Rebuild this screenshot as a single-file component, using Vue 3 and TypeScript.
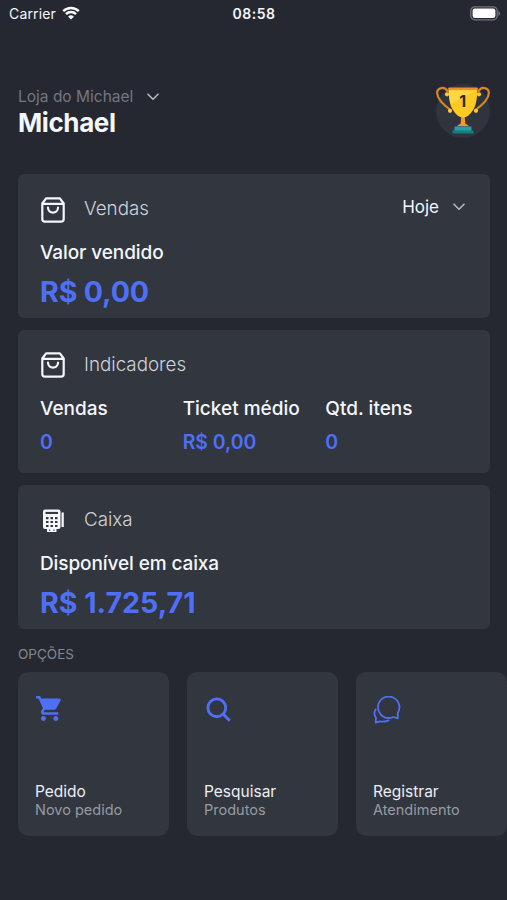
<script setup lang="ts">
interface Indicator {
  label: string
  value: string
}
interface Option {
  icon: 'cart' | 'search' | 'chat'
  title: string
  subtitle: string
}

const indicators: Indicator[] = [
  { label: 'Vendas', value: '0' },
  { label: 'Ticket médio', value: 'R$ 0,00' },
  { label: 'Qtd. itens', value: '0' },
]

const options: Option[] = [
  { icon: 'cart', title: 'Pedido', subtitle: 'Novo pedido' },
  { icon: 'search', title: 'Pesquisar', subtitle: 'Produtos' },
  { icon: 'chat', title: 'Registrar', subtitle: 'Atendimento' },
]
</script>

<template>
  <div class="screen">
    <div class="status">
      <div class="carrier">
        <span class="carrier-name">Carrier</span>
        <svg class="wifi" viewBox="0 0 18 14">
          <path d="M1.2 5.1a11.2 11.2 0 0 1 15.6 0" />
          <path d="M4 8.1a7.2 7.2 0 0 1 10 0" />
          <path class="dot" d="M9 13.6 6.1 10.7a4.1 4.1 0 0 1 5.8 0z" />
        </svg>
      </div>
      <span class="clock">08:58</span>
      <svg class="battery" viewBox="0 0 31 15">
        <rect class="shell" x=".8" y=".8" width="26.4" height="13" rx="4" />
        <rect class="charge" x="2.6" y="2.6" width="22.8" height="9.4" rx="2.2" />
        <path class="cap" d="M28.4 4.9c2.2.7 2.2 4.1 0 4.8z" />
      </svg>
    </div>

    <header class="header">
      <div>
        <div class="store">
          <span class="store-name">Loja do Michael</span>
          <svg class="chevron" viewBox="0 0 12 8"><path d="m1 1.2 5 5 5-5" /></svg>
        </div>
        <h1 class="user">Michael</h1>
      </div>
      <div class="badge">
        <svg class="trophy" viewBox="0 0 54 54">
          <g fill="none" stroke="#d9862a" stroke-width="2.2" stroke-linecap="round">
            <path d="M11.5 7.2C9 2.2.9 3.1 1.2 9.3c.2 6.5 7 12.2 13.8 17" />
            <path d="M42.5 7.2C45 2.2 53.1 3.1 52.8 9.3c-.2 6.5-7 12.2-13.8 17" />
          </g>
          <g fill="#fbc83c">
            <circle cx="11" cy="10.3" r="2.1" /><circle cx="43" cy="10.3" r="2.1" />
            <circle cx="14" cy="26.8" r="2.1" /><circle cx="40" cy="26.8" r="2.1" />
          </g>
          <path d="M25.3 31h3.4l.6 8.5 4 2.7H20.7l4-2.7z" fill="#f39a26" />
          <path d="M12.5 4h29c-.3 9-1 17-4.5 22-2.7 4.5-6 7.5-10 7.5s-7.3-3-10-7.5c-3.500-5-4.200-13-4.500-22z" fill="#fdca22" />
          <path d="M12.6 6.5h27.5L14.9 20c-1.500-4-2.100-8.500-2.300-13.500z" fill="#ffdf58" opacity=".6" />
          <path d="M12.5 3.5h29V6h-29z" fill="#ef9127" />
          <path d="M18.5 42.5h17V47h-17z" fill="#279fa2" />
          <path d="M16.5 46.5h21v3h-21z" fill="#157c84" />
          <text x="26.7" y="22.7" text-anchor="middle">1</text>
        </svg>
      </div>
    </header>

    <main class="cards">
      <section class="card">
        <div class="card-head">
          <svg class="bag" viewBox="0 0 24 26">
            <path d="M1.3 6.5 5.1 1.4h13.8l3.8 5.1v15.4a2.7 2.7 0 0 1-2.7 2.7H4a2.7 2.7 0 0 1-2.7-2.7zM1.3 6.8h21.4M7 10.7c.2 6.5 9.8 6.5 10 0" />
          </svg>
          <h2 class="card-title">Vendas</h2>
          <div class="period">
            <span class="period-name">Hoje</span>
            <svg class="chevron" viewBox="0 0 12 8"><path d="m1 1.2 5 5 5-5" /></svg>
          </div>
        </div>
        <div class="label heading">Valor vendido</div>
        <div class="amount">R$ 0,00</div>
      </section>

      <section class="card">
        <div class="card-head">
          <svg class="bag" viewBox="0 0 24 26">
            <path d="M1.3 6.5 5.1 1.4h13.8l3.8 5.1v15.4a2.7 2.7 0 0 1-2.7 2.7H4a2.7 2.7 0 0 1-2.7-2.7zM1.3 6.8h21.4M7 10.7c.2 6.5 9.8 6.5 10 0" />
          </svg>
          <h2 class="card-title">Indicadores</h2>
        </div>
        <div class="indicators">
          <div v-for="item in indicators" :key="item.label">
            <div class="label">{{ item.label }}</div>
            <div class="value">{{ item.value }}</div>
          </div>
        </div>
      </section>

      <section class="card">
        <div class="card-head">
          <svg class="register" viewBox="0 0 24 26">
            <rect x="2" y="1.5" width="17.5" height="19.5" rx="2" fill="#f4f6fa" />
            <path d="M20.5 4.500h2.300V19h-2.300z" fill="#f4f6fa" />
            <path d="M6 20.500h9.500V24H6z" fill="#f4f6fa" />
            <g fill="#31363f">
              <path d="M4.500 3.900H17V6H4.500z" />
              <path d="M5 9.100h2.500v2.100H5zM9.500 9.100H12v2.100H9.500zM14 9.100h2.500v2.100H14zM5 13h2.500v2.100H5zM9.500 13H12v2.100H9.500zM14 13h2.500v2.100H14zM5 16.900h2.500v2H5zM9.500 16.900H12v2H9.500zM14 16.900h2.500v2H14z" />
              <path d="M8 21.500h1.200v1.300H8zM12.300 21.500h1.200v1.300h-1.200z" />
            </g>
          </svg>
          <h2 class="card-title">Caixa</h2>
        </div>
        <div class="label heading">Disponível em caixa</div>
        <div class="amount total">R$ 1.725,71</div>
      </section>
    </main>

    <h3 class="section-title">OPÇÕES</h3>
    <nav class="options">
      <a v-for="option in options" :key="option.title" class="option">
        <svg v-if="option.icon === 'cart'" class="cart" viewBox="1 2 21 20">
          <path d="M7 18c-1.100 0-1.990.9-1.990 2S5.900 22 7 22s2-.9 2-2-.9-2-2-2zM1 2v2h2l3.600 7.590-1.350 2.450c-.16.280-.25.610-.25.960 0 1.100.9 2 2 2h12v-2H7.420c-.14 0-.25-.11-.25-.25l.03-.12.900-1.630h7.450c.75 0 1.410-.41 1.750-1.030l3.580-6.490A1.003 1.003 0 0 0 20 4H5.210l-.94-2H1zm16 16c-1.100 0-1.990.9-1.990 2s.89 2 1.990 2 2-.9 2-2-.9-2-2-2z" />
        </svg>
        <svg v-else-if="option.icon === 'search'" class="search" viewBox="0 0 26 26">
          <circle cx="10.8" cy="10.8" r="8.900" />
          <path d="m17.300 17.300 6.500 6.500" />
        </svg>
        <svg v-else class="chat" viewBox="0 0 28 28">
          <path d="M24.700 22.400l.2-5.600A10.700 10.700 0 1 0 16 22c1.700 0 3.200-.4 4.600-1z" />
          <path d="M2.600 13.500c-2 3.200-1.200 6 .4 8.200l-.4 4.900 4.300-1.300c3 .8 6 .3 8.700-.9" />
        </svg>
        <div class="option-title">{{ option.title }}</div>
        <div class="option-subtitle">{{ option.subtitle }}</div>
      </a>
    </nav>
  </div>
</template>

<style>
body {
  background: #252831;
}
</style>

<style scoped>
.screen {
  box-sizing: border-box;
  width: 100%;
  height: 900px;
  overflow: hidden;
  background: #252831;
  color: #f4f6fa;
  font-family: Inter, "Liberation Sans", sans-serif;
}
h1, h2, h3 {
  margin: 0;
}
svg {
  display: block;
  flex: none;
}
.status {
  display: grid;
  grid-template-columns: 1fr auto 1fr;
  align-items: center;
  height: 27px;
  padding: 0 6px 0 9px;
}
.carrier {
  display: flex;
  align-items: center;
  gap: 6px;
}
.carrier-name {
  font-size: 14px;
  line-height: 20px;
  letter-spacing: 0.15px;
}
.wifi {
  width: 18px;
  height: 14px;
  margin-top: -1px;
  fill: none;
  stroke: #f8f9fb;
  stroke-width: 2.5;
}
.wifi .dot {
  fill: #f8f9fb;
  stroke: none;
}
.clock {
  margin-left: -2px;
  font-size: 14px;
  line-height: 20px;
  font-weight: 600;
  letter-spacing: 0.55px;
}
.battery {
  width: 31px;
  height: 15px;
  justify-self: end;
}
.shell {
  fill: none;
  stroke: #70737a;
  stroke-width: 1.3;
}
.charge {
  fill: #fff;
}
.cap {
  fill: #70737a;
}
.header {
  display: flex;
  justify-content: space-between;
  align-items: flex-start;
  height: 91px;
  padding: 56px 17px 0 18px;
}
.store {
  display: flex;
  align-items: center;
  gap: 14px;
  height: 27px;
}
.store-name {
  color: #737780;
  font-size: 15.5px;
  line-height: 20px;
}
.chevron {
  width: 12px;
  height: 8px;
  fill: none;
  stroke: #b5b8bf;
  stroke-width: 1.6;
  stroke-linecap: round;
  stroke-linejoin: round;
}
.user {
  font-size: 26px;
  line-height: 26px;
  font-weight: 700;
  letter-spacing: -0.4px;
}
.badge {
  width: 54px;
  height: 54px;
  margin-top: 1px;
  border-radius: 50%;
  background: #2f343d;
}
.trophy {
  width: 54px;
  height: 54px;
}
.trophy text {
  fill: #2b2923;
  font-size: 16px;
  font-weight: 700;
}
.cards {
  display: grid;
  grid-auto-rows: 143.6px;
  gap: 12px;
  padding: 0 17px 0 18px;
}
.card {
  box-sizing: border-box;
  padding: 20px 22px 0;
  border-radius: 6px;
  background: #31363f;
}
.card-head {
  display: flex;
  align-items: center;
  height: 29px;
}
.bag,
.register {
  width: 24px;
  height: 26px;
  margin: 2px 19px 0 1px;
}
.bag {
  fill: none;
  stroke: #f4f6fa;
  stroke-width: 2.2;
  stroke-linejoin: round;
  stroke-linecap: round;
}
.card-title {
  margin-top: 1px;
  color: #cfd2d8;
  font-size: 18.8px;
  line-height: 26px;
  font-weight: 300;
}
.period {
  display: flex;
  align-items: center;
  gap: 14px;
  margin: -3px 3px 0 auto;
}
.period-name {
  font-size: 17px;
  line-height: 22px;
}
.label {
  font-size: 19px;
  line-height: 26px;
  font-weight: 500;
}
.heading {
  margin-top: 17px;
  letter-spacing: -0.1px;
}
.amount {
  margin-top: 7px;
  color: #4f70f6;
  font-size: 28.6px;
  line-height: 38px;
  font-weight: 700;
  letter-spacing: -0.15px;
}
.total {
  letter-spacing: 0;
}
.indicators {
  display: grid;
  grid-template-columns: repeat(3, 1fr);
  margin-top: 17px;
}
.value {
  margin-top: 7px;
  color: #4f70f6;
  font-size: 19.4px;
  line-height: 26px;
  font-weight: 600;
}
.section-title {
  margin: 16px 0 8px 18px;
  color: #84878e;
  font-size: 13.5px;
  line-height: 19px;
  font-weight: 400;
}
.options {
  display: grid;
  grid-template-columns: repeat(3, 151px);
  gap: 18px;
  padding-left: 18px;
}
.option {
  box-sizing: border-box;
  height: 164px;
  padding: 24px 17px 0;
  border-radius: 10px;
  background: #31363f;
}
.cart {
  width: 26px;
  height: 25px;
  margin: 0 0 61px 1px;
  fill: #4f70f6;
}
.search {
  width: 26px;
  height: 26px;
  margin: 1px 0 59px 2px;
  fill: none;
  stroke: #4f70f6;
  stroke-width: 2.9;
}
.chat {
  width: 28px;
  height: 28px;
  margin-bottom: 58px;
  fill: none;
  stroke: #4f70f6;
  stroke-width: 1.8;
  stroke-linejoin: round;
  stroke-linecap: round;
}
.option-title {
  color: #eceef2;
  font-size: 15.5px;
  line-height: 19px;
}
.option-subtitle {
  color: #989ba2;
  font-size: 14.5px;
  line-height: 18px;
}
</style>
